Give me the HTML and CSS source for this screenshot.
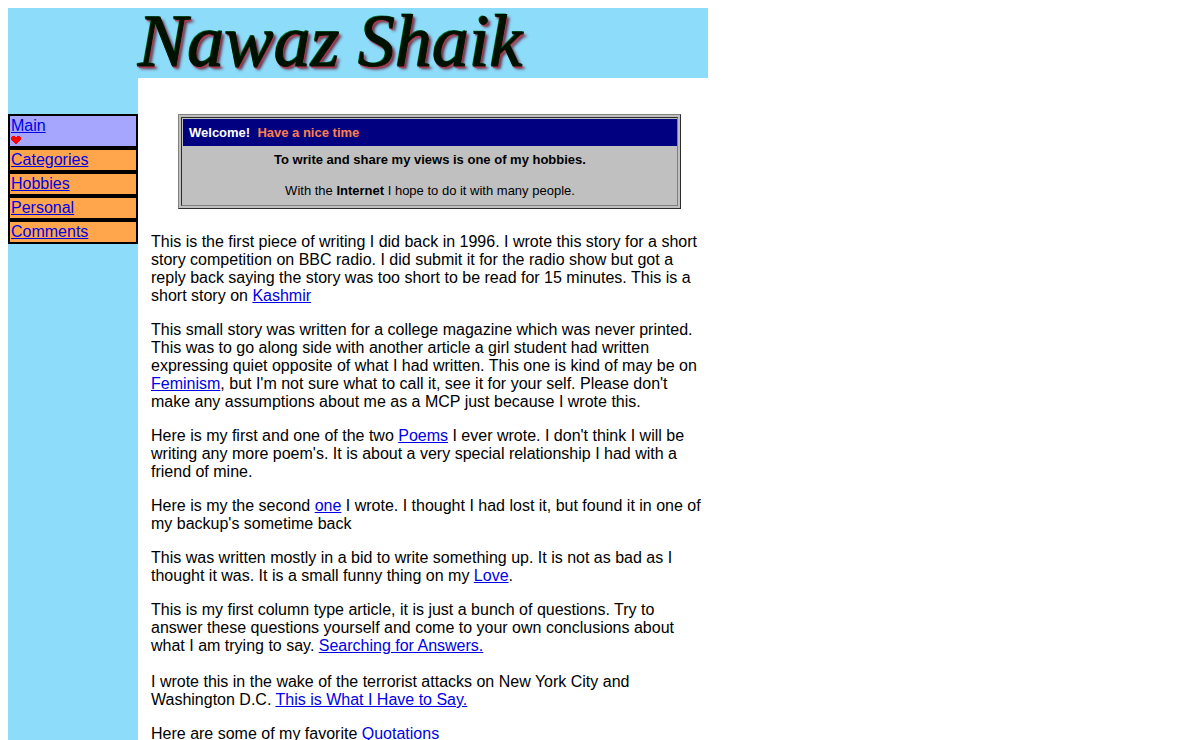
FILE: index.html
```html
<!DOCTYPE html>
<html lang="en">
<head>
<meta charset="utf-8">
<title>Nawaz Shaik</title>
<link rel="stylesheet" href="styles.css">
</head>
<body>
<div class="page">
  <header class="banner"><h1 class="banner-title">Nawaz Shaik</h1></header>
  <div class="columns">
    <nav class="sidebar" aria-label="Main menu">
      <ul class="menu">
        <li class="menu-item current"><a href="#main">Main</a>
          <svg class="heart" viewBox="0 0 10 9" aria-hidden="true"><path fill="#f00" d="M1 0h3v1h2V0h3v1h1v3H9v1H8v1H7v1H6v1H4V7H3V6H2V5H1V4H0V1h1z"/></svg>
        </li>
        <li class="menu-item"><a href="#categories">Categories</a></li>
        <li class="menu-item"><a href="#hobbies">Hobbies</a></li>
        <li class="menu-item"><a href="#personal">Personal</a></li>
        <li class="menu-item"><a href="#comments">Comments</a></li>
      </ul>
    </nav>
    <main class="content">
      <section class="welcome">
        <div class="welcome-inner">
          <h2 class="welcome-title">Welcome!&nbsp; <span class="greeting">Have a nice time</span></h2>
          <div class="welcome-body">
            <p><b>To write and share my views is one of my hobbies.</b></p>
            <p>With the <b>Internet</b> I hope to do it with many people.</p>
          </div>
        </div>
      </section>
      <p>This is the first piece of writing I did back in 1996. I wrote this story for a short story competition on BBC radio. I did submit it for the radio show but got a reply back saying the story was too short to be read for 15 minutes. This is a short story on <a href="#kashmir">Kashmir</a></p>
      <p>This small story was written for a college magazine which was never printed. This was to go along side with another article a girl student had written expressing quiet opposite of what I had written. This one is kind of may be on <a href="#feminism">Feminism</a>, but I'm not sure what to call it, see it for your self. Please don't make any assumptions about me as a MCP just because I wrote this.</p>
      <p>Here is my first and one of the two <a href="#poems">Poems</a> I ever wrote. I don't think I will be writing any more poem's. It is about a very special relationship I had with a friend of mine.</p>
      <p>Here is my the second <a href="#one">one</a> I wrote. I thought I had lost it, but found it in one of my backup's sometime back</p>
      <p>This was written mostly in a bid to write something up. It is not as bad as I thought it was. It is a small funny thing on my <a href="#love">Love</a>.</p>
      <p>This is my first column type article, it is just a bunch of questions. Try to answer these questions yourself and come to your own conclusions about what I am trying to say. <a href="#answers">Searching for Answers.</a><br><br>I wrote this in the wake of the terrorist attacks on New York City and Washington D.C. <a href="#say">This is What I Have to Say.</a></p>
      <p>Here are some of my favorite <a href="#quotations">Quotations</a></p>
    </main>
  </div>
</div>
</body>
</html>
```
FILE: styles.css
```css
body {
  margin: 8px 8px 0;
  background: #fff;
  color: #000;
  font: 16px/18px "Liberation Sans", Arial, sans-serif;
}

a {
  color: #0000e6;
}

.page {
  max-width: 700px;
}

.banner {
  background: #8cdcfa;
  padding: 0 0 4px 130px;
}

.banner-title {
  margin: 0;
  font: italic 400 74px/66px "Monotype Corsiva", "Liberation Serif", serif;
  color: #010;
  -webkit-text-stroke: 1px #010;
  text-shadow: -1px -1px 0 #007830, 1px 2px 1px #b03a50, 3px 3px 3px #6a3048;
  white-space: nowrap;
}

.columns {
  display: flex;
}

.sidebar {
  flex: 0 0 130px;
  background: #8cdcfa;
  padding-top: 36px;
}

.menu {
  margin: 0;
  padding: 0;
  list-style: none;
}

.menu-item {
  border: 2px solid #000;
  background: #ffa64d;
  padding-left: 1px;
  line-height: 20px;
}

.menu-item.current {
  background: #a6a6ff;
}

.heart {
  display: block;
  width: 10px;
  height: 9px;
  margin-bottom: 1px;
}

.content {
  flex: 1;
  min-width: 0;
  padding: 36px 0 0 13px;
}

.content p {
  margin: 0 0 16px;
}

.welcome {
  margin: 0 27px 24px;
  border: 1px solid;
  border-color: #808080 #2c2c2c #2c2c2c #808080;
  background: #c0c0c0;
  padding: 2px;
  font-size: 13px;
  line-height: 15px;
}

.welcome-inner {
  border: 1px solid;
  border-color: #2c2c2c #808080 #808080 #2c2c2c;
  padding: 1px 0 0 1px;
}

.welcome-title {
  margin: 0;
  padding: 6px;
  background: #000080;
  color: #fff;
  font-size: 13px;
  line-height: 15px;
}

.greeting {
  color: #ff7f50;
}

.welcome-body {
  padding: 6px 6px 7px;
  text-align: center;
}

.welcome-body p:last-child {
  margin-bottom: 0;
}
```
